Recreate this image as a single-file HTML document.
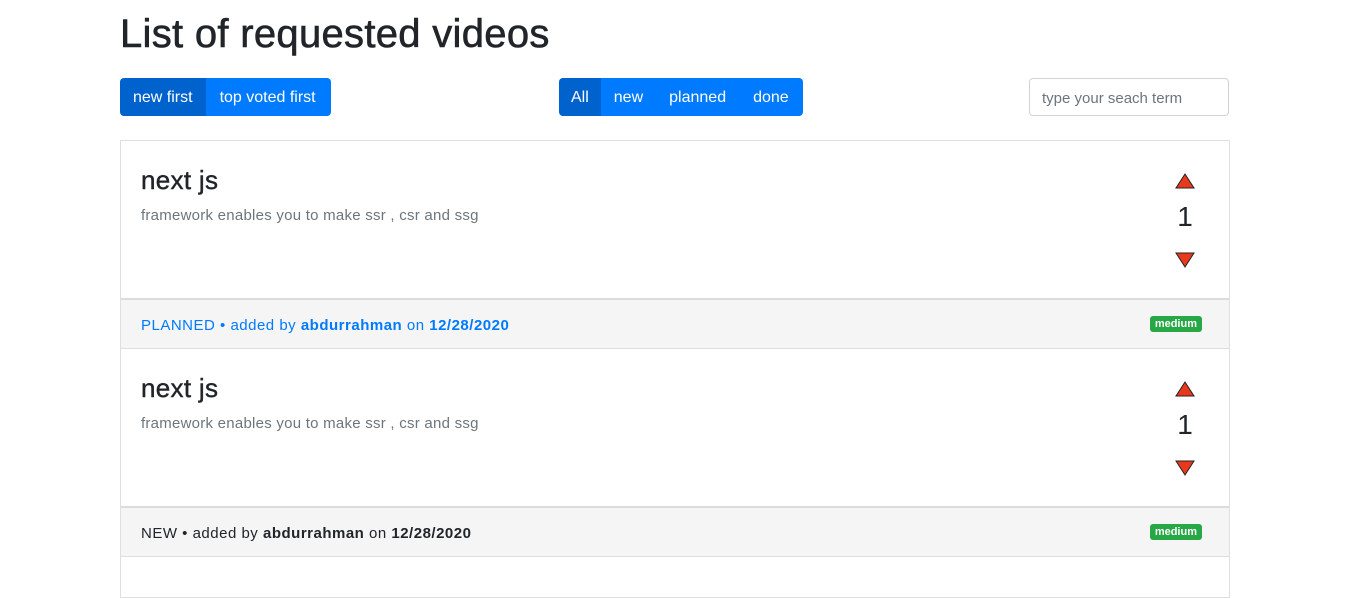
<!DOCTYPE html>
<html><head><style>
*{box-sizing:border-box;margin:0;padding:0}
body{width:1348px;height:565px;overflow:hidden;background:#fff;font-family:"Liberation Sans",sans-serif;color:#212529}
h1{position:absolute;left:120px;top:10px;font-size:40px;font-weight:500;line-height:48px;letter-spacing:0.3px;-webkit-text-stroke:0.6px #212529}
.bg{position:absolute;top:78px;height:38px;display:flex;border-radius:4px;overflow:hidden}
.bg div{background:#007bff;color:#fff;font-size:16px;line-height:40px;padding:0 13px;letter-spacing:0}
.bg div.a{background:#0062cc}
.search{position:absolute;left:1029px;top:78px;width:200px;height:38px;border:1px solid #ced4da;border-radius:4px;font-size:15px;color:#6c757d;padding:0 12px;line-height:40px}
.card{position:absolute;left:120px;width:1110px;border:1px solid #dfdfdf;background:#fff}
.body{height:159px;position:relative;border-bottom:2px solid #dcdcdc}
.body h2{position:absolute;left:20px;top:24px;font-size:26px;font-weight:500;-webkit-text-stroke:0.4px #212529;letter-spacing:0.3px}
.body p{position:absolute;left:20px;top:66px;font-size:15px;color:#6c757d;letter-spacing:0.25px}
.up,.dn{position:absolute;left:1054px}
.up{top:31px}
.dn{top:110px}
.num{position:absolute;left:1050px;width:28px;text-align:center;top:60px;font-size:28px}
.foot{height:49px;background:#f5f5f5;font-size:15px;line-height:51px;padding-left:20px;position:relative;border-bottom:1px solid #dfdfdf;letter-spacing:0.5px}
.badge{position:absolute;right:27px;top:16px;background:#28a745;color:#fff;font-size:11px;font-weight:bold;line-height:16px;padding:0 5px;border-radius:3px;letter-spacing:0}
</style></head><body>
<h1>List of requested videos</h1>
<div class="bg" style="left:120px"><div class="a">new first</div><div style="padding:0 15px 0 14px">top voted first</div></div>
<div class="bg" style="left:559px"><div class="a" style="padding:0 12px">All</div><div>new</div><div>planned</div><div style="padding:0 14px">done</div></div>
<div class="search">type your seach term</div>
<div class="card" style="top:140px">
<div class="body"><h2>next js</h2><p>framework enables you to make ssr , csr and ssg</p>
<svg class="up" width="20" height="18"><polygon points="10,2 19,16 1,16" fill="#e8391c" stroke="#222" stroke-width="1"/></svg>
<div class="num">1</div>
<svg class="dn" width="20" height="18"><polygon points="1,2 19,2 10,16" fill="#e8391c" stroke="#222" stroke-width="1"/></svg></div>
<div class="foot" style="color:#007bff">PLANNED • added by <b>abdurrahman</b> on <b>12/28/2020</b><span class="badge">medium</span></div>
<div class="body"><h2>next js</h2><p>framework enables you to make ssr , csr and ssg</p>
<svg class="up" width="20" height="18"><polygon points="10,2 19,16 1,16" fill="#e8391c" stroke="#222" stroke-width="1"/></svg>
<div class="num">1</div>
<svg class="dn" width="20" height="18"><polygon points="1,2 19,2 10,16" fill="#e8391c" stroke="#222" stroke-width="1"/></svg></div>
<div class="foot">NEW • added by <b>abdurrahman</b> on <b>12/28/2020</b><span class="badge">medium</span></div>
<div style="height:40px"></div>
</div>
</body></html>
